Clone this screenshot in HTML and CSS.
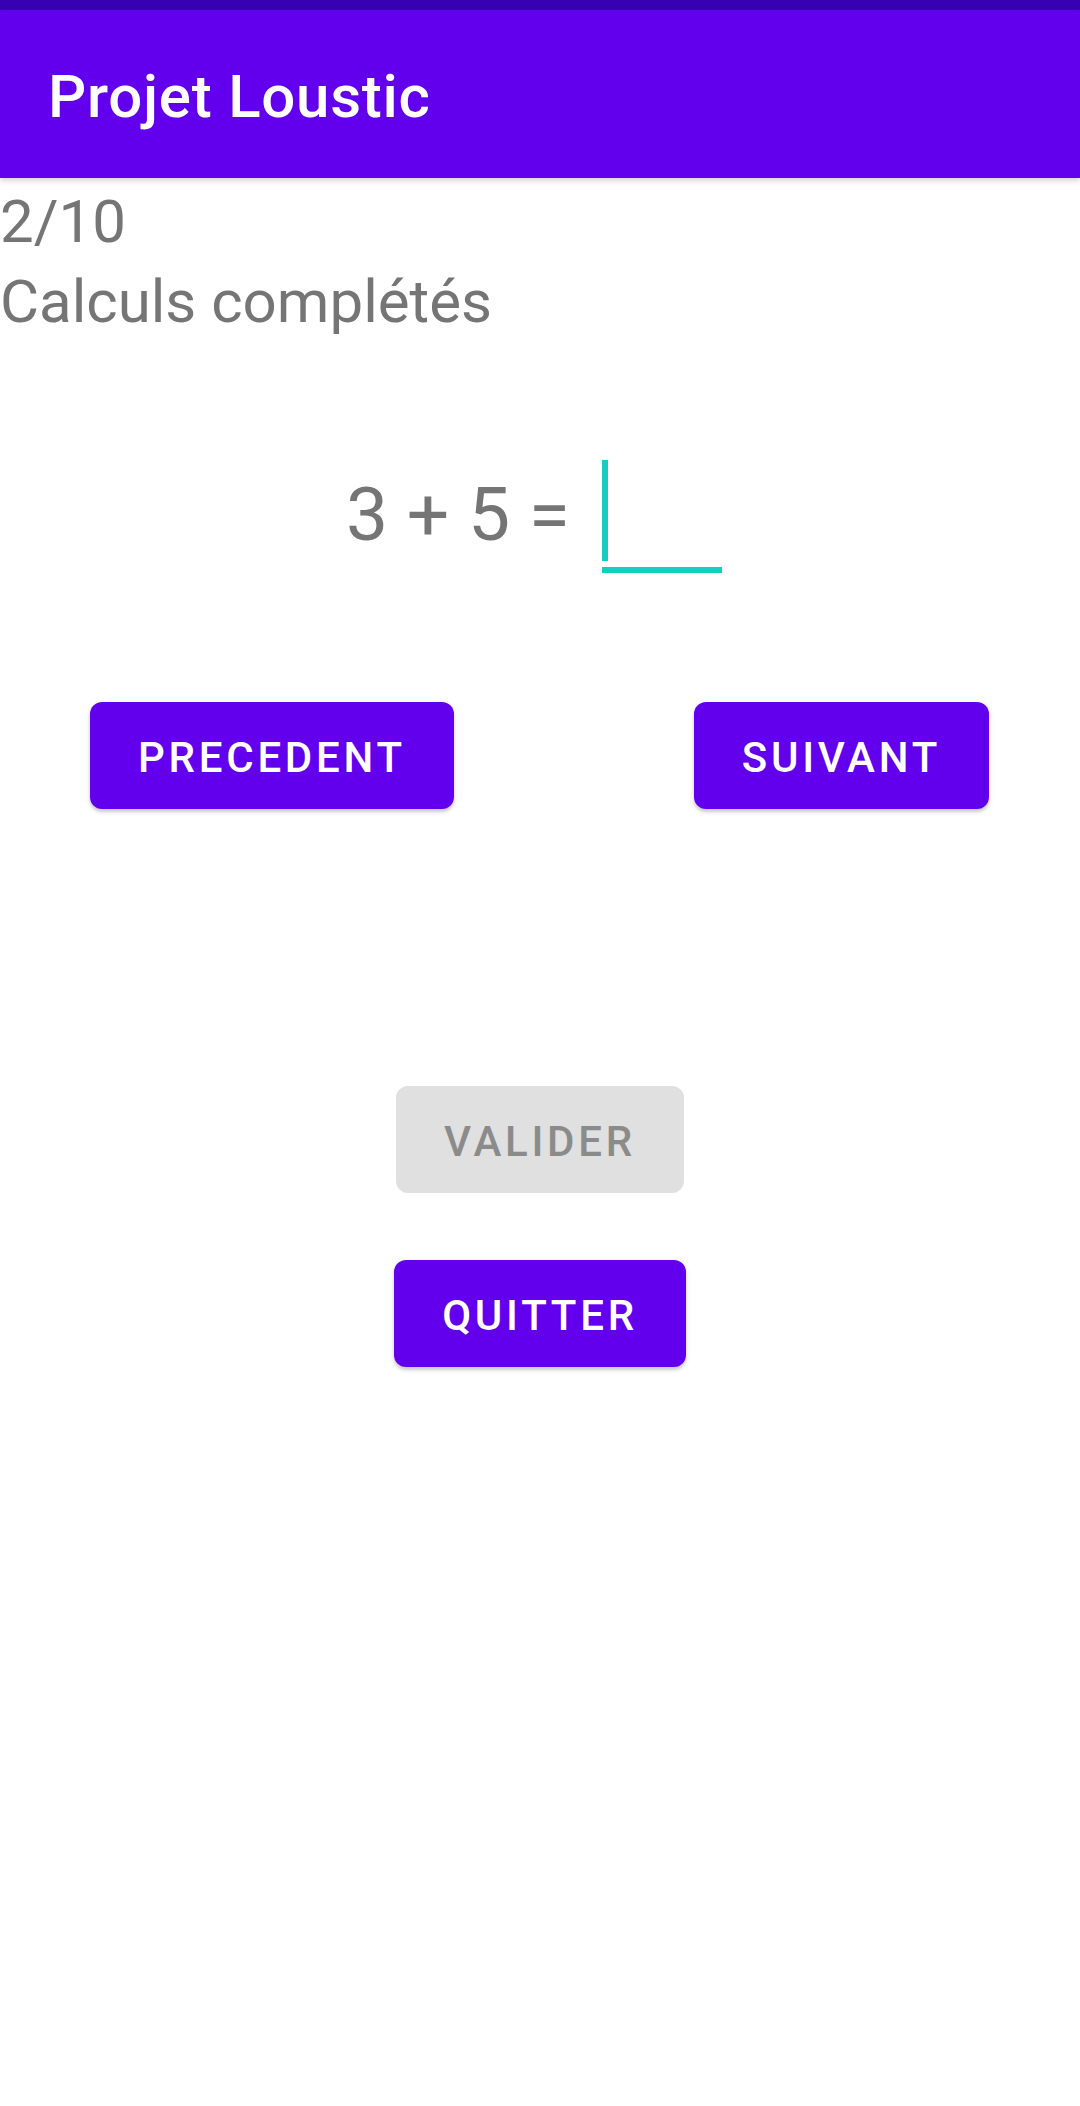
FILE: index.html
```html
<!DOCTYPE html>
<html lang="fr">
<head>
<meta charset="utf-8">
<title>Projet Loustic</title>
<link rel="stylesheet" href="styles.css">
</head>
<body>
<div class="statusbar"></div>
<header class="appbar"><h1 class="title">Projet Loustic</h1></header>
<main class="content">
  <div class="progress">
    <p class="line">2/10</p>
    <p class="line">Calculs complétés</p>
  </div>
  <div class="equation">
    <span class="expr">3 + 5 =</span>
    <div class="field"><div class="cursor"></div></div>
  </div>
  <div class="nav-row">
    <button class="btn primary">PRECEDENT</button>
    <button class="btn primary">SUIVANT</button>
  </div>
  <div class="center-col">
    <button class="btn disabled">VALIDER</button>
    <button class="btn primary">QUITTER</button>
  </div>
</main>
</body>
</html>
```
FILE: styles.css
```css
* { box-sizing: border-box; }
html, body { margin: 0; padding: 0; background: #ffffff; }
body {
  width: 1080px;
  height: 2106px;
  font-family: Roboto, "Noto Sans", "Liberation Sans", sans-serif;
  overflow: hidden;
}
.statusbar { height: 10px; background: #3700B3; }
.appbar {
  height: 168px;
  background: #6200EE;
  display: flex;
  align-items: center;
  padding: 6px 0 0 48px;
  box-shadow: 0 4px 6px rgba(0,0,0,0.10), 0 2px 3px rgba(0,0,0,0.06);
  position: relative;
  z-index: 1;
}
.title {
  margin: 0;
  font-size: 60px;
  font-weight: 500;
  letter-spacing: 0.75px;
  color: #ffffff;
  line-height: 1.2;
}
.content { display: flex; flex-direction: column; }
.progress { padding-top: 4px; }
.line {
  margin: 0;
  font-size: 60px;
  line-height: 80px;
  color: #757575;
}
.equation {
  display: flex;
  align-items: flex-end;
  margin-top: 118px;
  padding-left: 346px;
}
.expr {
  font-size: 75px;
  line-height: 88px;
  color: #757575;
  margin-bottom: 15px;
  white-space: pre;
}
.field {
  width: 120px;
  height: 113px;
  margin-left: 32px;
  border-bottom: 6px solid #14CFC0;
  display: flex;
  flex-direction: column;
}
.cursor { width: 6px; height: 101px; background: #14CFC0; }
.nav-row {
  display: flex;
  justify-content: space-between;
  padding: 0 91px 0 90px;
  margin-top: 129px;
}
.btn {
  height: 107px;
  border: 0;
  border-radius: 12px;
  padding: 4px 48px 0;
  font-family: Roboto, "Noto Sans", "Liberation Sans", sans-serif;
  font-size: 42px;
  font-weight: 500;
  letter-spacing: 3.75px;
  display: flex;
  align-items: center;
  justify-content: center;
}
.primary {
  background: #6200EE;
  color: #ffffff;
  box-shadow: 0 3px 3px rgba(0,0,0,0.14), 0 2px 6px rgba(0,0,0,0.10);
}
.disabled {
  background: #E0E0E0;
  color: #8B8B8B;
}
.center-col {
  display: flex;
  flex-direction: column;
  align-items: center;
  gap: 67px;
  margin-top: 277px;
}
```
